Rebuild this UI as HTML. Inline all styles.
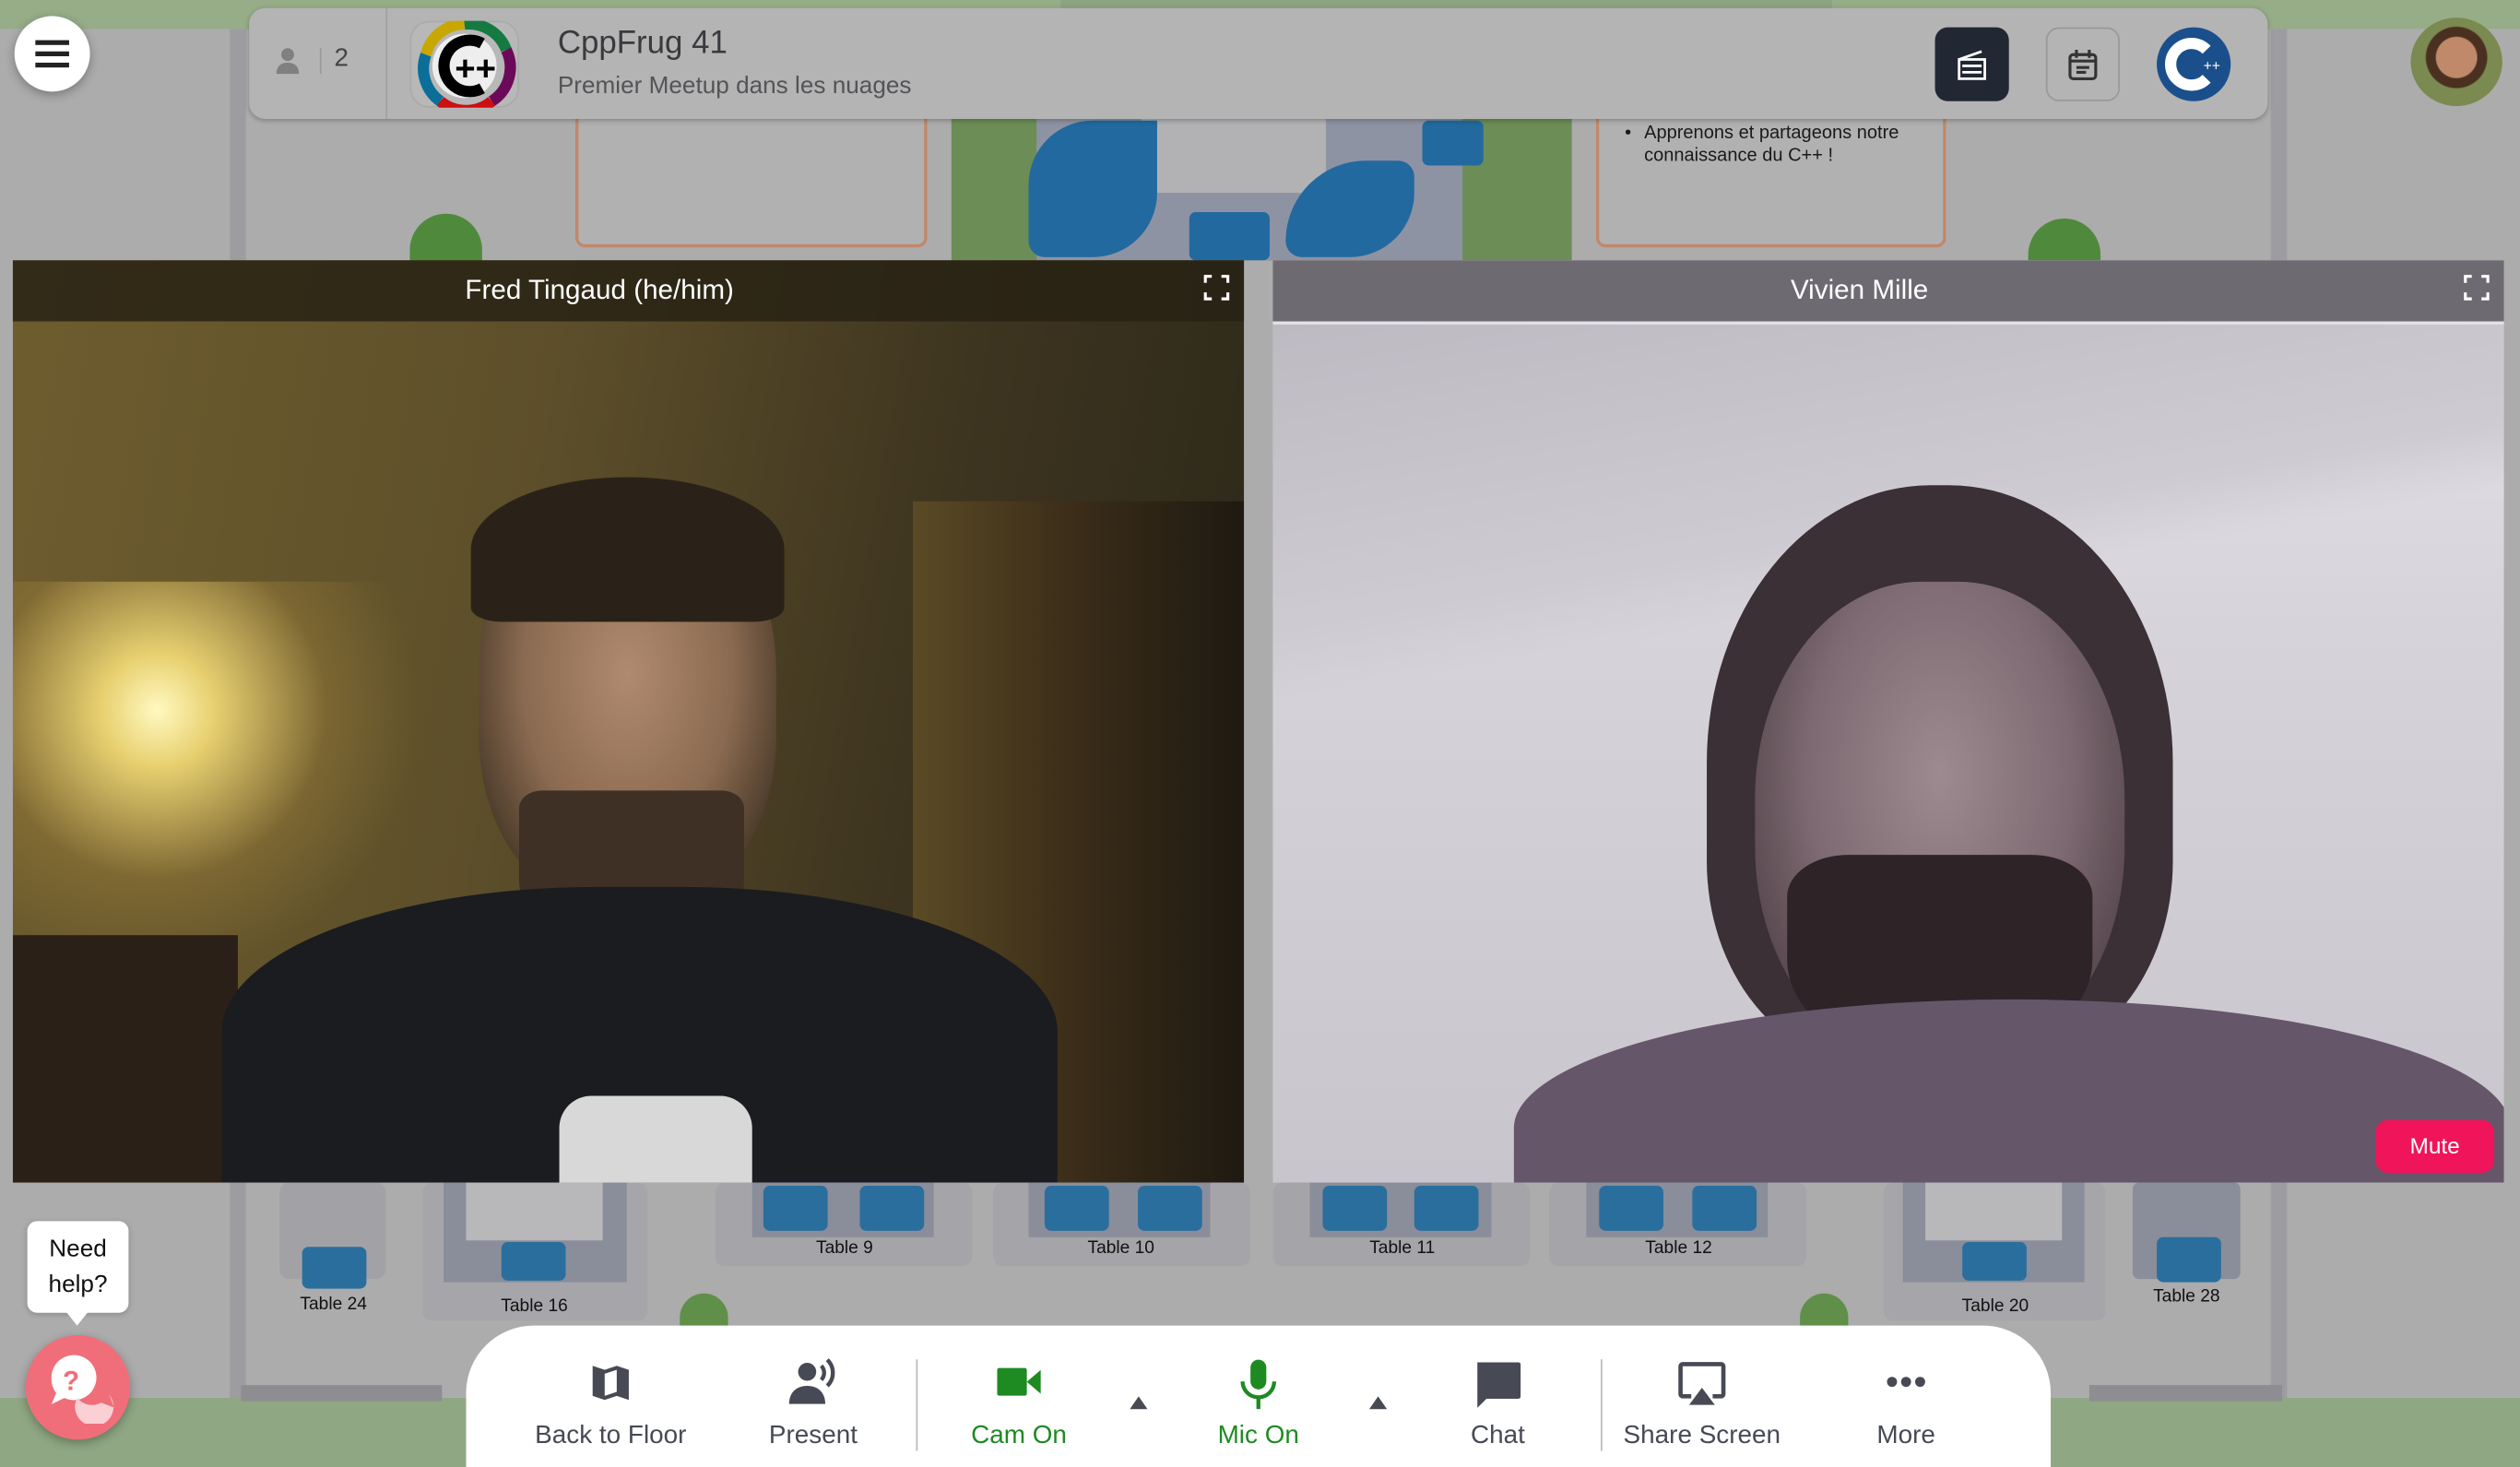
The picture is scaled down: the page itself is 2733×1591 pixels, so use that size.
<!DOCTYPE html>
<html><head><meta charset="utf-8"><style>
*{margin:0;padding:0;box-sizing:border-box}
html,body{width:2733px;height:1591px;overflow:hidden;background:#a9a9aa;font-family:"Liberation Sans",sans-serif}
#s{position:absolute;left:0;top:0;width:1568px;height:913px;transform:scale(1.74298,1.74261);transform-origin:0 0;background:#acacad;overflow:hidden}
.a{position:absolute}
.lbl{position:absolute;font-size:11px;color:#111;text-align:center}
.tb{position:absolute;background:#a2a2a6;border-radius:6px}
.chair{position:absolute;background:#2a6e9e;border-radius:4px}
.tool{position:absolute;top:0;height:88px;text-align:center;font-size:16px;color:#474a55}
.tool svg{position:absolute;left:50%;transform:translateX(-50%);top:20px}
.tool span{position:absolute;top:60px;left:0;right:0;white-space:nowrap}
</style></head><body><div id="s">
<div class="a" style="left:0;top:0;width:1568px;height:18px;background:#96ad88"></div>
<div class="a" style="left:660px;top:0;width:480px;height:10px;background:#8ea37f"></div>
<div class="a" style="left:143px;top:18px;width:10px;height:895px;background:#9c9ca1"></div>
<div class="a" style="left:1413px;top:18px;width:10px;height:895px;background:#9c9ca1"></div>
<div class="a" style="left:0;top:870px;width:1568px;height:43px;background:#8fa783"></div>
<div class="a" style="left:150px;top:862px;width:125px;height:10px;background:#8d8d92"></div>
<div class="a" style="left:1300px;top:862px;width:120px;height:10px;background:#8d8d92"></div>
<div class="a" style="left:358px;top:70px;width:219px;height:84px;border:2px solid #c2876a;border-top:none;border-radius:0 0 6px 6px;background:#b1b1b2"></div>
<div class="a" style="left:592px;top:70px;width:386px;height:92px;background:#6c8d55"></div>
<div class="a" style="left:645px;top:70px;width:265px;height:92px;background:#8e93a3"></div>
<div class="a" style="left:710px;top:70px;width:115px;height:50px;background:#b2b2b5"></div>
<div class="a" style="left:640px;top:75px;width:80px;height:85px;background:#22699f;border-radius:40px 0 40px 10px"></div>
<div class="a" style="left:800px;top:100px;width:80px;height:60px;background:#22699f;border-radius:50px 10px 40px 10px"></div>
<div class="a" style="left:740px;top:132px;width:50px;height:30px;background:#22699f;border-radius:4px"></div>
<div class="a" style="left:885px;top:75px;width:38px;height:28px;background:#22699f;border-radius:4px"></div>
<div class="a" style="left:993px;top:70px;width:218px;height:84px;border:2px solid #c2876a;border-top:none;border-radius:0 0 6px 6px;background:#b1b1b2;font-size:11.5px;color:#1a1a1a;padding:6px 8px 0 28px;line-height:14px">Apprenons et partageons notre connaissance du C++ !<span style="position:absolute;left:16px;top:6px">•</span></div>
<div class="a" style="left:255px;top:133px;width:45px;height:30px;background:#4f8a3c;border-radius:30px 30px 0 0"></div>
<div class="a" style="left:1262px;top:136px;width:45px;height:26px;background:#4f8a3c;border-radius:30px 30px 0 0"></div>
<div class="a" style="left:155px;top:5px;width:1256px;height:69px;background:#b4b4b4;border-radius:10px;box-shadow:0 1px 3px rgba(0,0,0,.25)"></div>
<div class="a" style="left:240px;top:5px;width:1px;height:69px;background:#a2a2a2"></div>
<svg class="a" style="left:170px;top:29px" width="18" height="18" viewBox="0 0 18 18"><circle cx="9" cy="5" r="4" fill="#808080"/><path d="M2 17c0-5 3-7 7-7s7 2 7 7z" fill="#808080"/></svg>
<div class="a" style="left:199px;top:30px;width:1px;height:16px;background:#999"></div>
<div class="a" style="left:208px;top:28px;font-size:16px;color:#444">2</div>
<div class="a" style="left:255px;top:13px;width:68px;height:54px;border-radius:12px;background:#b8b8b8;border:1px solid #aaa"></div>
<svg class="a" style="left:256px;top:13px" width="66" height="54" viewBox="0 0 66 54">
<path d="M33 2A25 25 0 0 0 9 21" stroke="#c8a800" stroke-width="7" fill="none"/>
<path d="M33 2A25 25 0 0 1 59 18" stroke="#157a40" stroke-width="7" fill="none"/>
<path d="M59 18A25 25 0 0 1 50 50" stroke="#6c0a5a" stroke-width="7" fill="none"/>
<path d="M9 21A25 25 0 0 0 18 50" stroke="#0a6e99" stroke-width="7" fill="none"/>
<path d="M18 50A25 25 0 0 0 50 50" stroke="#cc1010" stroke-width="7" fill="none"/>
<circle cx="33" cy="28" r="20" fill="#eee"/>
<path d="M44 14A16 16 0 1 0 44 42" stroke="#000" stroke-width="7" fill="none"/>
<text x="27" y="37" font-size="22" font-weight="bold" font-family="Liberation Sans" fill="#000">++</text></svg>
<div class="a" style="left:347px;top:16px;font-size:20px;color:#3a3a3e">CppFrug 41</div>
<div class="a" style="left:347px;top:45px;font-size:15px;color:#545458">Premier Meetup dans les nuages</div>
<div class="a" style="left:1204px;top:17px;width:46px;height:46px;background:#222734;border-radius:8px"></div>
<svg class="a" style="left:1216px;top:29px" width="22" height="22" viewBox="0 0 22 22" fill="none" stroke="#fff" stroke-width="1.6"><rect x="3" y="8" width="16" height="12"/><path d="M3 8l14-5M5 12h12M5 16h12"/></svg>
<div class="a" style="left:1273px;top:17px;width:46px;height:46px;background:#b4b4b4;border:1px solid #999;border-radius:8px"></div>
<svg class="a" style="left:1285px;top:29px" width="22" height="22" viewBox="0 0 22 22" fill="none" stroke="#333" stroke-width="1.8"><rect x="3" y="5" width="16" height="15" rx="2"/><path d="M7 2v5M15 2v5M3 9h16M7 13h8M7 16h6"/></svg>
<svg class="a" style="left:1341px;top:16px" width="48" height="48" viewBox="0 0 48 48"><circle cx="24" cy="24" r="23" fill="#1a4f8c"/><path d="M32 15A13 13 0 1 0 32 33" stroke="#fff" stroke-width="7" fill="none"/><text x="30" y="28" font-size="9" fill="#fff" font-family="Liberation Sans">++</text></svg>
<div class="a" style="left:1500px;top:11px;width:57px;height:55px;border-radius:50%;background:radial-gradient(circle at 50% 45%,#c08a6a 0 30%,#4a3020 32% 45%,#7a8a50 47%)"></div>
<div class="a" style="left:9px;top:10px;width:47px;height:47px;border-radius:50%;background:#fff;box-shadow:0 2px 6px rgba(0,0,0,.3)"></div>
<div class="a" style="left:22px;top:25px;width:21px;height:3px;background:#222;box-shadow:0 7px 0 #222,0 14px 0 #222"></div>
<div class="a" style="left:8px;top:162px;width:766px;height:574px;overflow:hidden;background:linear-gradient(100deg,#6e5d2e 0%,#5d4f2a 40%,#3e3520 70%,#2a2618 100%)">
 <div class="a" style="left:0;top:200px;width:250px;height:250px;background:radial-gradient(circle at 90px 80px,#fff9c0 0,#e8d070 15%,rgba(160,130,60,.4) 45%,transparent 70%)"></div>
 <div class="a" style="left:560px;top:150px;width:206px;height:424px;background:linear-gradient(90deg,#5a4a25,#3a2c18 50%,#1e1a12)"></div>
 <div class="a" style="left:0;top:420px;width:140px;height:154px;background:#2a2018"></div>
 <div class="a" style="left:290px;top:140px;width:185px;height:260px;border-radius:45% 45% 40% 40%;background:radial-gradient(ellipse at 50% 45%,#b08a70 0,#8a6a50 50%,#4a3a2a 80%)"></div>
 <div class="a" style="left:285px;top:135px;width:195px;height:90px;border-radius:50% 50% 10% 10%;background:#2a2218"></div>
 <div class="a" style="left:315px;top:330px;width:140px;height:110px;border-radius:10% 10% 50% 50%;background:#3e3024"></div>
 <div class="a" style="left:130px;top:390px;width:520px;height:200px;border-radius:45% 45% 0 0;background:#1a1c20"></div>
 <div class="a" style="left:340px;top:520px;width:120px;height:60px;background:#d8d8d8;border-radius:20px 20px 0 0"></div>
</div>
<div class="a" style="left:8px;top:162px;width:766px;height:38px;background:rgba(40,34,20,.85);color:#fff;font-size:17px;text-align:center;line-height:38px;padding-right:36px">Fred Tingaud (he/him)</div>
<svg class="a" style="left:748px;top:170px" width="18" height="18" viewBox="0 0 18 18" fill="none" stroke="#fff" stroke-width="1.8"><path d="M2 6V2h4M12 2h4v4M16 12v4h-4M6 16H2v-4"/></svg>
<div class="a" style="left:792px;top:162px;width:766px;height:574px;overflow:hidden;background:linear-gradient(180deg,#e6e3ea 0%,#d6d3da 40%,#c8c5cc 100%)">
 <div class="a" style="left:0;top:40px;width:766px;height:260px;background:linear-gradient(170deg,#bdbac2 0%,#cfcbd3 50%,transparent 60%)"></div>
 <div class="a" style="left:270px;top:140px;width:290px;height:360px;border-radius:48% 48% 35% 35%;background:#3a3035"></div>
 <div class="a" style="left:300px;top:200px;width:230px;height:300px;border-radius:45% 45% 45% 45%;background:radial-gradient(ellipse at 50% 40%,#9d8a90 0,#7d6a72 50%,#4a3a40 90%)"></div>
 <div class="a" style="left:320px;top:370px;width:190px;height:130px;border-radius:20% 20% 50% 50%;background:#2e2428"></div>
 <div class="a" style="left:150px;top:460px;width:620px;height:160px;border-radius:50% 50% 0 0;background:#65566a"></div>
</div>
<div class="a" style="left:792px;top:162px;width:766px;height:38px;background:rgba(95,93,100,.9);color:#fff;font-size:17px;text-align:center;line-height:38px;padding-right:36px">Vivien Mille</div>
<svg class="a" style="left:1532px;top:170px" width="18" height="18" viewBox="0 0 18 18" fill="none" stroke="#fff" stroke-width="1.8"><path d="M2 6V2h4M12 2h4v4M16 12v4h-4M6 16H2v-4"/></svg>
<div class="a" style="left:1478px;top:697px;width:74px;height:33px;background:#f0145a;border-radius:8px;color:#fff;font-size:14px;text-align:center;line-height:33px">Mute</div>
<div class="tb" style="left:174px;top:736px;width:66px;height:60px"></div>
<div class="chair" style="left:188px;top:776px;width:40px;height:26px"></div>
<div class="lbl" style="left:170px;top:806px;width:75px">Table 24</div>
<div class="tb" style="left:263px;top:736px;width:140px;height:86px;background:#a6a6aa"></div>
<div class="a" style="left:276px;top:736px;width:114px;height:62px;background:#8a8d9a"></div>
<div class="a" style="left:290px;top:736px;width:85px;height:36px;background:#b8b8ba"></div>
<div class="chair" style="left:312px;top:773px;width:40px;height:24px"></div>
<div class="lbl" style="left:295px;top:807px;width:75px">Table 16</div>
<div class="tb" style="left:445px;top:736px;width:160px;height:52px;background:#a5a5a9"></div>
<div class="a" style="left:468px;top:736px;width:113px;height:34px;background:#8a8d9a"></div>
<div class="lbl" style="left:488px;top:771px;width:75px">Table 9</div>
<div class="tb" style="left:618px;top:736px;width:160px;height:52px;background:#a5a5a9"></div>
<div class="a" style="left:640px;top:736px;width:113px;height:34px;background:#8a8d9a"></div>
<div class="lbl" style="left:660px;top:771px;width:75px">Table 10</div>
<div class="tb" style="left:792px;top:736px;width:160px;height:52px;background:#a5a5a9"></div>
<div class="a" style="left:815px;top:736px;width:113px;height:34px;background:#8a8d9a"></div>
<div class="lbl" style="left:835px;top:771px;width:75px">Table 11</div>
<div class="tb" style="left:964px;top:736px;width:160px;height:52px;background:#a5a5a9"></div>
<div class="a" style="left:987px;top:736px;width:113px;height:34px;background:#8a8d9a"></div>
<div class="lbl" style="left:1007px;top:771px;width:75px">Table 12</div>
<div class="chair" style="left:475px;top:738px;width:40px;height:28px"></div><div class="chair" style="left:535px;top:738px;width:40px;height:28px"></div>
<div class="chair" style="left:650px;top:738px;width:40px;height:28px"></div><div class="chair" style="left:708px;top:738px;width:40px;height:28px"></div>
<div class="chair" style="left:823px;top:738px;width:40px;height:28px"></div><div class="chair" style="left:880px;top:738px;width:40px;height:28px"></div>
<div class="chair" style="left:995px;top:738px;width:40px;height:28px"></div><div class="chair" style="left:1053px;top:738px;width:40px;height:28px"></div>
<div class="tb" style="left:1172px;top:736px;width:138px;height:86px;background:#a6a6aa"></div>
<div class="a" style="left:1184px;top:736px;width:113px;height:62px;background:#8a8d9a"></div>
<div class="a" style="left:1198px;top:736px;width:85px;height:36px;background:#b8b8ba"></div>
<div class="chair" style="left:1221px;top:773px;width:40px;height:24px"></div>
<div class="lbl" style="left:1204px;top:807px;width:75px">Table 20</div>
<div class="a" style="left:1327px;top:736px;width:67px;height:60px;background:#8a8d9a;border-radius:4px"></div>
<div class="chair" style="left:1342px;top:770px;width:40px;height:28px"></div>
<div class="lbl" style="left:1323px;top:801px;width:75px">Table 28</div>
<div class="a" style="left:1120px;top:805px;width:30px;height:20px;background:#5f8f48;border-radius:20px 20px 0 0"></div>
<div class="a" style="left:423px;top:805px;width:30px;height:20px;background:#5f8f48;border-radius:20px 20px 0 0"></div>
<div class="a" style="left:17px;top:760px;width:63px;height:57px;background:#fff;border-radius:6px;font-size:15px;color:#111;text-align:center;line-height:22px;padding-top:7px;box-shadow:0 1px 4px rgba(0,0,0,.2)">Need<br>help?</div>
<div class="a" style="left:40px;top:815px;width:0;height:0;border-left:8px solid transparent;border-right:8px solid transparent;border-top:10px solid #fff"></div>
<div class="a" style="left:16px;top:831px;width:65px;height:65px;border-radius:50%;background:#f06e7a;box-shadow:0 2px 6px rgba(0,0,0,.3)"></div>
<svg class="a" style="left:26px;top:840px" width="46" height="46" viewBox="0 0 46 46"><path d="M6 18a14 14 0 1 1 8 12l-8 4 3-7a14 14 0 0 1-3-9z" fill="#fff"/><path d="M22 30a12 12 0 1 0 20-2l3 8-8-3a12 12 0 0 1-15-3z" fill="#fbd0d4"/><text x="13" y="25" font-size="17" font-weight="bold" fill="#f06e7a" font-family="Liberation Sans">?</text></svg>
<div class="a" style="left:290px;top:825px;width:986px;height:88px;background:#fff;border-radius:42px 42px 0 0"></div>
<div class="a" style="left:570px;top:846px;width:1px;height:57px;background:#bbb"></div>
<div class="a" style="left:996px;top:846px;width:1px;height:57px;background:#bbb"></div>
<div style="position:absolute;left:0;top:825px;width:1568px;height:88px">
<div class="tool" style="left:320px;width:120px"><svg width="30" height="30" viewBox="0 0 24 24" fill="#474a55"><path d="M3 4l6 2 6-2 6 2v15l-6-2-6 2-6-2zM9 8v11l6-2V6z" fill-rule="evenodd"/></svg><span>Back to Floor</span></div>
<div class="tool" style="left:456px;width:100px"><svg width="36" height="30" viewBox="0 0 28 24" fill="#474a55"><circle cx="11" cy="7" r="4.5"/><path d="M2 23c0-6 4-9 9-9s9 3 9 9z"/><path d="M18 4a5 5 0 0 1 0 7M21 1a9 9 0 0 1 0 13" stroke="#474a55" stroke-width="2" fill="none"/></svg><span>Present</span></div>
<div class="tool" style="left:584px;width:100px;color:#1e8a22"><svg width="32" height="30" viewBox="0 0 26 24" fill="#1e8a22"><rect x="2" y="5" width="15" height="14" rx="1"/><path d="M17 12l7-6v12z"/></svg><span>Cam On</span></div>
<svg class="a" style="left:702px;top:43px" width="13" height="10" viewBox="0 0 13 10"><path d="M6.5 1L12 9H1z" fill="#474a55"/></svg>
<div class="tool" style="left:733px;width:100px;color:#1e8a22"><svg width="30" height="32" viewBox="0 0 24 26" fill="#1e8a22"><rect x="8" y="1" width="8" height="15" rx="4"/><path d="M4 12a8 8 0 0 0 16 0" stroke="#1e8a22" stroke-width="2" fill="none"/><rect x="11" y="20" width="2" height="6"/></svg><span>Mic On</span></div>
<svg class="a" style="left:851px;top:43px" width="13" height="10" viewBox="0 0 13 10"><path d="M6.5 1L12 9H1z" fill="#474a55"/></svg>
<div class="tool" style="left:882px;width:100px"><svg width="34" height="34" viewBox="0 0 24 24" fill="#474a55"><path d="M3 2h18a1 1 0 0 1 1 1v14a1 1 0 0 1-1 1H7l-4 4z"/></svg><span>Chat</span></div>
<div class="tool" style="left:1004px;width:110px"><svg width="36" height="32" viewBox="0 0 26 24" fill="none" stroke="#474a55" stroke-width="2"><path d="M8 18H4a1 1 0 0 1-1-1V4a1 1 0 0 1 1-1h18a1 1 0 0 1 1 1v13a1 1 0 0 1-1 1h-4"/><path d="M13 14l6 8H7z" fill="#474a55" stroke="none"/></svg><span>Share Screen</span></div>
<div class="tool" style="left:1136px;width:100px"><svg width="30" height="30" viewBox="0 0 24 24" fill="#474a55"><circle cx="5" cy="12" r="2.5"/><circle cx="12" cy="12" r="2.5"/><circle cx="19" cy="12" r="2.5"/></svg><span>More</span></div>
</div>
</div></body></html>
